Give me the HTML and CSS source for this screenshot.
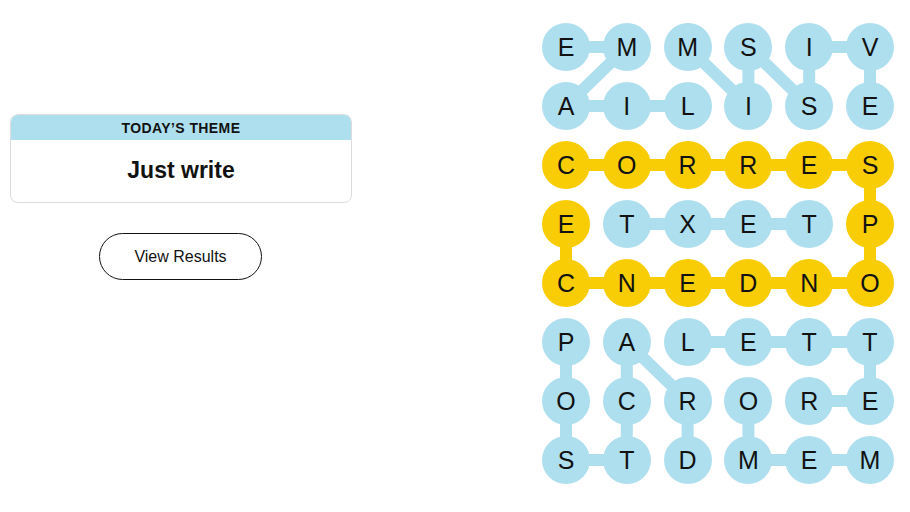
FILE: index.html
```html
<!DOCTYPE html>
<html lang="en">
<head>
<meta charset="utf-8">
<title>Strands</title>
<link rel="stylesheet" href="styles.css">
</head>
<body>
<main class="page">
  <section class="side">
    <div class="theme-card">
      <div class="theme-head">Today’s Theme</div>
      <div class="theme-body">Just write</div>
    </div>
    <button class="results-btn" type="button">View Results</button>
  </section>

  <section class="board">
    <svg class="links" width="352" height="461" viewBox="0 0 352 461" aria-hidden="true">
      <g stroke="#aedfee" stroke-width="12" fill="none">
        <!-- EMAIL -->
        <line x1="24" y1="24" x2="84.8" y2="24"/>
        <line x1="84.8" y1="24" x2="24" y2="83"/>
        <line x1="24" y1="83" x2="145.6" y2="83"/>
        <!-- MISSIVE -->
        <line x1="145.6" y1="24" x2="206.4" y2="83"/>
        <line x1="206.4" y1="83" x2="206.4" y2="24"/>
        <line x1="206.4" y1="24" x2="267.2" y2="83"/>
        <line x1="267.2" y1="83" x2="267.2" y2="24"/>
        <line x1="267.2" y1="24" x2="328" y2="24"/>
        <line x1="328" y1="24" x2="328" y2="83"/>
        <!-- TEXT -->
        <line x1="84.8" y1="201" x2="267.2" y2="201"/>
        <!-- POSTCARD -->
        <line x1="24" y1="319" x2="24" y2="437"/>
        <line x1="24" y1="437" x2="84.8" y2="437"/>
        <line x1="84.8" y1="437" x2="84.8" y2="319"/>
        <line x1="84.8" y1="319" x2="145.6" y2="378"/>
        <line x1="145.6" y1="378" x2="145.6" y2="437"/>
        <!-- LETTER -->
        <line x1="145.6" y1="319" x2="328" y2="319"/>
        <line x1="328" y1="319" x2="328" y2="378"/>
        <line x1="328" y1="378" x2="267.2" y2="378"/>
        <!-- MEMO -->
        <line x1="206.4" y1="378" x2="206.4" y2="437"/>
        <line x1="206.4" y1="437" x2="328" y2="437"/>
      </g>
      <g stroke="#f8cd05" stroke-width="12" fill="none">
        <!-- CORRESPONDENCE -->
        <line x1="24" y1="142" x2="328" y2="142"/>
        <line x1="328" y1="142" x2="328" y2="260"/>
        <line x1="328" y1="260" x2="24" y2="260"/>
        <line x1="24" y1="260" x2="24" y2="201"/>
      </g>
    </svg>
    <div class="grid">
      <span class="cell found">E</span><span class="cell found">M</span><span class="cell found">M</span><span class="cell found">S</span><span class="cell found">I</span><span class="cell found">V</span>
      <span class="cell found">A</span><span class="cell found">I</span><span class="cell found">L</span><span class="cell found">I</span><span class="cell found">S</span><span class="cell found">E</span>
      <span class="cell spangram">C</span><span class="cell spangram">O</span><span class="cell spangram">R</span><span class="cell spangram">R</span><span class="cell spangram">E</span><span class="cell spangram">S</span>
      <span class="cell spangram">E</span><span class="cell found">T</span><span class="cell found">X</span><span class="cell found">E</span><span class="cell found">T</span><span class="cell spangram">P</span>
      <span class="cell spangram">C</span><span class="cell spangram">N</span><span class="cell spangram">E</span><span class="cell spangram">D</span><span class="cell spangram">N</span><span class="cell spangram">O</span>
      <span class="cell found">P</span><span class="cell found">A</span><span class="cell found">L</span><span class="cell found">E</span><span class="cell found">T</span><span class="cell found">T</span>
      <span class="cell found">O</span><span class="cell found">C</span><span class="cell found">R</span><span class="cell found">O</span><span class="cell found">R</span><span class="cell found">E</span>
      <span class="cell found">S</span><span class="cell found">T</span><span class="cell found">D</span><span class="cell found">M</span><span class="cell found">E</span><span class="cell found">M</span>
    </div>
  </section>
</main>
</body>
</html>
```

FILE: styles.css
```css
* { box-sizing: border-box; }

html, body {
  margin: 0;
  padding: 0;
  background: #ffffff;
  color: #121212;
  font-family: "Liberation Sans", Arial, sans-serif;
}

.page {
  display: flex;
  align-items: flex-start;
  justify-content: space-between;
  padding: 23px 16px 0 10px;
  width: 910px;
  height: 512px;
}

.side {
  width: 342px;
  margin-top: 91px;
  display: flex;
  flex-direction: column;
  align-items: center;
}

.theme-card {
  width: 100%;
  border: 1px solid #dcdcdc;
  border-radius: 8px;
  overflow: hidden;
}

.theme-head {
  height: 25px;
  background: #aedfee;
  text-align: center;
  font-size: 14px;
  font-weight: 700;
  letter-spacing: 0.4px;
  text-transform: uppercase;
  line-height: 27px;
  color: #121212;
}

.theme-body {
  height: 62px;
  display: flex;
  align-items: center;
  justify-content: center;
  font-size: 23px;
  font-weight: 700;
  color: #121212;
  padding-bottom: 2px;
}

.results-btn {
  margin-top: 30px;
  width: 163px;
  height: 47px;
  border: 1px solid #121212;
  border-radius: 24px;
  background: #ffffff;
  font-family: "Liberation Sans", Arial, sans-serif;
  font-size: 16px;
  color: #121212;
  padding: 0;
  margin-left: -1px;
}

.board {
  position: relative;
  width: 352px;
  height: 461px;
}

.links {
  position: absolute;
  left: 0;
  top: 0;
}

.grid {
  position: relative;
  display: grid;
  grid-template-columns: repeat(6, 48px);
  grid-auto-rows: 48px;
  column-gap: 12.8px;
  row-gap: 11px;
}

.cell {
  width: 48px;
  height: 48px;
  border-radius: 50%;
  display: flex;
  align-items: center;
  justify-content: center;
  font-size: 25px;
  font-weight: 400;
  color: #121212;
  padding-top: 1px;
}

.found { background: #aedfee; }
.spangram { background: #f8cd05; }
```
